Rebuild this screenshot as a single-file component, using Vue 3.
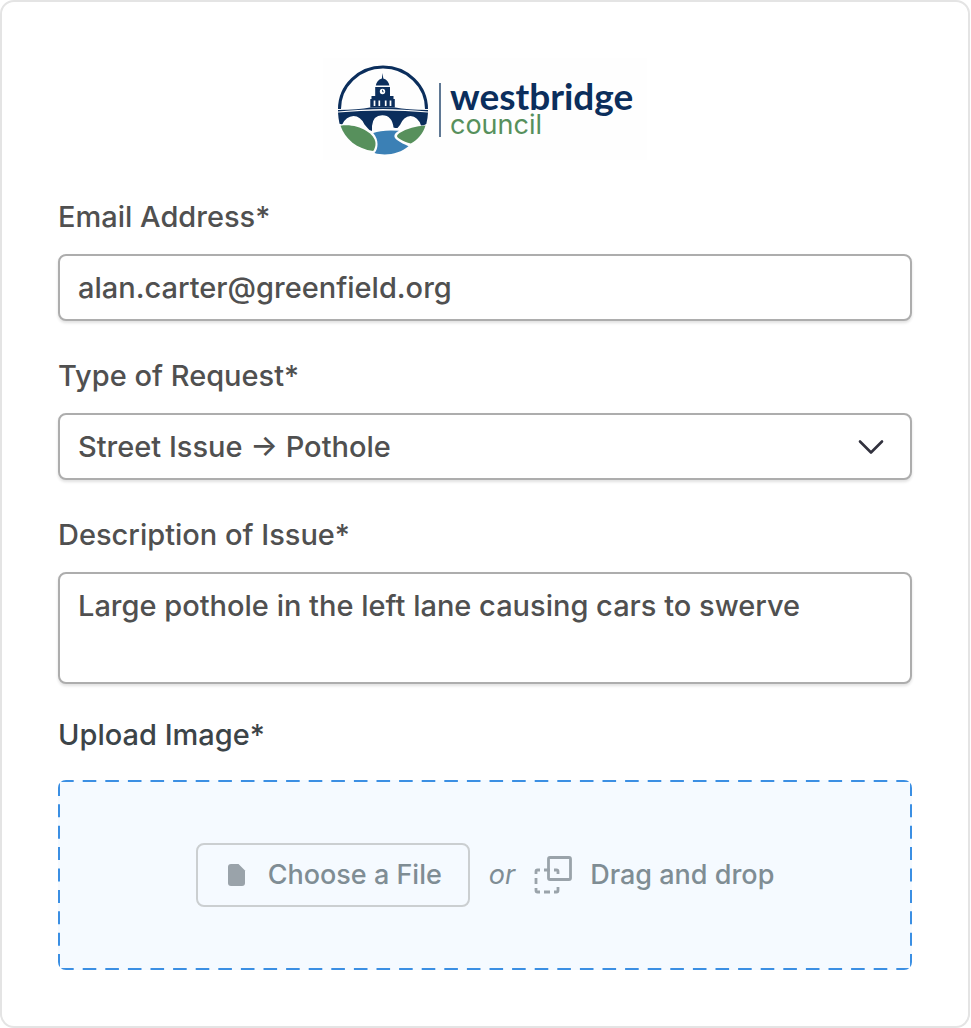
<script setup>
import { ref } from 'vue'

const email = ref('alan.carter@greenfield.org')
const requestType = ref('pothole')
const description = ref('Large pothole in the left lane causing cars to swerve')
</script>

<template>
  <form class="card" @submit.prevent>
    <header class="brand" aria-label="westbridge council">
      <svg class="emblem" viewBox="0 0 92 92" aria-hidden="true">
        <path d="M2.500 45A43.500 42 0 0 1 89.500 45" fill="none" stroke="#0b2e5c" stroke-width="3" />
        <g fill="#0b2e5c">
          <path d="M45.500 9l.8 5.500c3.600 1 5.600 3.700 6.100 7H38.800c.5-3.300 2.500-6 6.100-7z" />
          <path d="M38.200 23h14.800v9H38.200z" />
          <path d="M34.500 32h22v3h1.300v8.500H33.300V35h1.200z" />
          <path d="M1 46Q22 45.500 33 43.500H58Q70 45.500 91 46v1.500Q66 45 46 45T1 47.500z" />
          <path d="M1 48.500Q24 46.500 46 46.500T91 48.500q-.2 5.500-1.700 11.500-2.300 1.500-5.300 1.500-3-9-10.500-9.500-7 .5-10.500 9l-2.500 3q-1.500.3-4-.5Q55 51.500 45.500 51.300T35 62v5q-3-.5-4.500-3l-3-3.500q-4-8.500-11-8.500-7.500.5-11 8-1.500.5-3-.2-1.200-5.800-1.500-11.300z" />
        </g>
        <circle cx="45.500" cy="27.500" r="2.700" fill="#fefefe" />
        <path d="M45.500 25.800v2h1.300" fill="none" stroke="#0b2e5c" stroke-width=".8" />
        <path d="M37.500 36.500V42M42.300 36.500V42M48.700 36.500V42M53.500 36.500V42" stroke="#fefefe" stroke-width="1.700" />
        <path d="M3.500 61.700C20 59 37.500 68.500 38.500 79c.1 3-.7 5.600-2.300 8C20 85 8 75 3.500 61.700z" fill="#57905c" />
        <path d="M36.200 69Q45 65.500 62 66.700C56.500 69.500 56 73.500 60 76c3.500 2.500 7.500 4.500 11.500 6.200C63 89.500 49 92.500 37.500 89 41.500 84.500 42 75.500 36.200 69z" fill="#3b80b5" />
        <path d="M88.500 61.500Q74 62 62.500 69c-3.500 2.500-3 4 .3 6 3.500 2.200 7 3.700 11 4.500C81 75.500 86 69.500 88.500 61.500z" fill="#57905c" />
      </svg>
      <span class="divider"></span>
      <div class="wordmark">
        <span class="name">westbridge</span>
        <span class="kind">council</span>
      </div>
    </header>

    <div class="field">
      <label for="email">Email Address*</label>
      <input id="email" v-model="email" class="control" type="email" />
    </div>

    <div class="field">
      <label for="type">Type of Request*</label>
      <div class="select-wrap">
        <select id="type" v-model="requestType" class="control">
          <option value="pothole">Street Issue → Pothole</option>
        </select>
        <svg class="chevron" viewBox="0 0 28 18" aria-hidden="true">
          <path d="M3 3.500l11 11 11-11" fill="none" stroke="#32323e" stroke-width="2.600" stroke-linecap="round" stroke-linejoin="round" />
        </svg>
      </div>
    </div>

    <div class="field">
      <label for="description">Description of Issue*</label>
      <textarea id="description" v-model="description" class="control area"></textarea>
    </div>

    <div class="field upload">
      <label for="file">Upload Image*</label>
      <div class="dropzone">
        <svg class="dashes" aria-hidden="true">
          <line x1="0" y1="1" x2="100%" y2="1" pathLength="8540" class="h" />
          <svg y="100%" overflow="visible"><line x1="0" y1="-1" x2="100%" y2="-1" pathLength="8540" class="h" /></svg>
          <line x1="1" y1="0" x2="1" y2="100%" pathLength="1900" class="v" />
          <svg x="100%" overflow="visible"><line x1="-1" y1="0" x2="-1" y2="100%" pathLength="1900" class="v" /></svg>
        </svg>
        <button id="file" type="button" class="choose">
          <svg class="file" viewBox="0 0 18 22" aria-hidden="true">
            <path d="M3 0h7.500L17 6.500V19a3 3 0 0 1-3 3H3a3 3 0 0 1-3-3V3a3 3 0 0 1 3-3z" fill="#9aa3aa" />
          </svg>
          Choose a File
        </button>
        <em class="or">or</em>
        <svg class="drag" viewBox="0 0 38 38" aria-hidden="true">
          <g fill="none" stroke="#9aa3aa" stroke-width="2.800">
            <rect x="14.500" y="1.500" width="22" height="22" rx="1.500" />
            <path d="M2 18v-2.500a1.500 1.500 0 0 1 1.500-1.500H6M10 14h6M20 14h2.500a1.500 1.500 0 0 1 1.500 1.500V18M24 31v3.500a1.500 1.500 0 0 1-1.500 1.500H20M16 36h-6M6 36H3.500A1.500 1.500 0 0 1 2 34.500V32M2 28v-6" />
          </g>
        </svg>
        <span class="drop-text">Drag and drop</span>
      </div>
    </div>
  </form>
</template>

<style>
body {
  background: #fff;
}
</style>

<style scoped>
* {
  box-sizing: border-box;
}

.card {
  margin: 0 1px 0 0;
  padding: 56px;
  min-height: 1028px;
  border: 2px solid #e4e4e4;
  border-radius: 14px;
  background: #fff;
  color: #505050;
  font: 500 29px/34px Inter, "Liberation Sans", sans-serif;
}

.brand {
  display: flex;
  align-items: center;
  width: 324px;
  height: 102px;
  margin: 0 auto 40px;
  padding: 2px 14px 0;
  background: #fefefe;
}

.emblem {
  flex: none;
  width: 92px;
  height: 92px;
}

.divider {
  flex: none;
  width: 2px;
  height: 54px;
  margin: 0 9px 0 10px;
  background: #5f7894;
}

.wordmark {
  display: flex;
  flex-direction: column;
}

.name {
  color: #0b2e5c;
  font-family: Lato, sans-serif;
  font-size: 37px;
  font-weight: 700;
  line-height: 30px;
}

.kind {
  color: #57905c;
  font-size: 27px;
  font-weight: 400;
  line-height: 28px;
}

.field {
  display: flex;
  flex-direction: column;
  gap: 20px;
  margin-bottom: 38px;
}

.control {
  display: block;
  width: 100%;
  height: 67px;
  margin: 0;
  padding: 0 18px;
  border: 2px solid #adadad;
  border-radius: 8px;
  background: #fff;
  box-shadow: 0 2px 3px rgba(0, 0, 0, 0.12);
  color: inherit;
  font: inherit;
  appearance: none;
  outline: none;
}

.area {
  height: 112px;
  margin-bottom: -4px;
  padding: 15px 18px;
  resize: none;
}

.select-wrap {
  position: relative;
}

.chevron {
  position: absolute;
  top: 25px;
  right: 27px;
  width: 28px;
  height: 18px;
  pointer-events: none;
}

.upload {
  gap: 28px;
  margin: 0;
  color: #3c4448;
}

.dropzone {
  position: relative;
  display: flex;
  align-items: center;
  justify-content: center;
  height: 190px;
  overflow: hidden;
  border-radius: 8px;
  background: #f5faff;
  color: #7f8d94;
  font-size: 27px;
  font-weight: 450;
}

.dashes {
  position: absolute;
  inset: 0;
  width: 100%;
  height: 100%;
  pointer-events: none;
}

.dashes line {
  stroke: #3b8fe3;
  stroke-width: 2;
}

.h {
  stroke-dasharray: 136 90;
  stroke-dashoffset: -21;
}

.v {
  stroke-dasharray: 130 84;
  stroke-dashoffset: -29;
}

.choose {
  display: flex;
  align-items: center;
  gap: 22px;
  height: 64px;
  padding: 0 26px 0 30px;
  border: 2px solid #cbcfd1;
  border-radius: 8px;
  background: transparent;
  color: inherit;
  font: inherit;
}

.file {
  width: 18px;
  height: 22px;
}

.or {
  margin: 0 19px;
  font-weight: 400;
}

.drag {
  width: 38px;
  height: 38px;
  margin-right: 18px;
}
</style>
